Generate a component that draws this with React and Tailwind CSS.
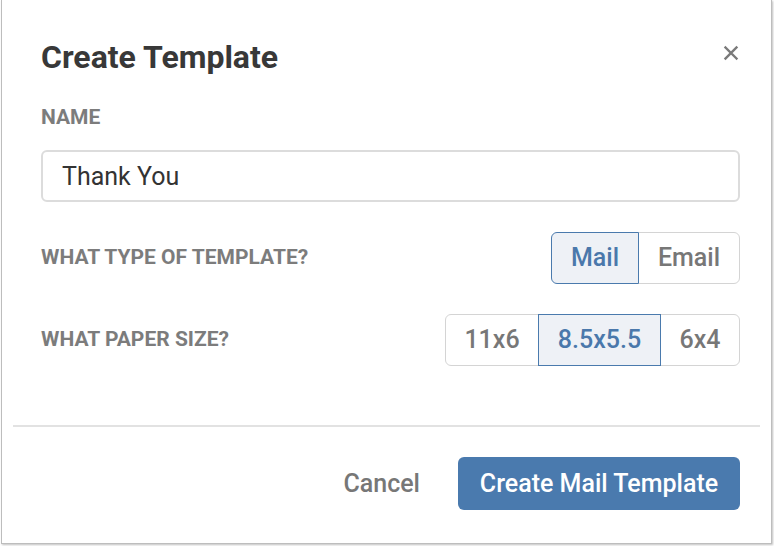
import React, { useState } from 'react';

const font = { fontFamily: 'Roboto, "Liberation Sans", sans-serif' };

function Segmented({ options, value, onChange }) {
  return (
    <div className="flex h-[52px]">
      {options.map((o, i) => {
        const active = o.value === value;
        const first = i === 0;
        const last = i === options.length - 1;
        return (
          <button
            key={o.value}
            onClick={() => onChange(o.value)}
            style={{ width: o.w }}
            className={[
              'h-full text-[25px] font-medium border',
              first ? 'rounded-l-md' : '-ml-px',
              last ? 'rounded-r-md' : '',
              active
                ? 'relative z-10 bg-[#eef1f6] border-[#4a7aad] text-[#4a78ab]'
                : 'bg-white border-[#d4d4d4] text-[#777]',
            ].join(' ')}
          >
            {o.label}
          </button>
        );
      })}
    </div>
  );
}

export default function App() {
  const [name, setName] = useState('Thank You');
  const [type, setType] = useState('mail');
  const [size, setSize] = useState('8.5x5.5');

  return (
    <div style={font} className="w-[774px] h-[546px] bg-white">
      <div className="w-[771px] h-[544px] ml-px border-l border-r border-b border-[#bdbdbd] shadow-[1px_1px_2px_rgba(0,0,0,0.25)] bg-white flex flex-col">
        <div className="pl-[39px] pr-[31px] pt-[37px]">
          <div className="flex items-start justify-between">
            <h1 className="text-[32px] font-bold text-[#383838] leading-[40px]">Create Template</h1>
            <button className="mt-[6px] mr-[-1px] text-[#7a7a7a]" aria-label="close">
              <svg width="20" height="20" viewBox="0 0 20 20">
                <path d="M4.5 4.5 L15.5 15.5 M15.5 4.5 L4.5 15.5" stroke="currentColor" strokeWidth="2.4" strokeLinecap="square" />
              </svg>
            </button>
          </div>

          <div className="mt-[28px] text-[21px] font-bold text-[#7c7c7c] leading-[24px]">NAME</div>
          <input
            value={name}
            onChange={(e) => setName(e.target.value)}
            className="mt-[21px] w-full h-[52px] border-2 border-[#dcdcdc] rounded-md px-[19px] text-[25px] text-[#333] outline-none"
          />

          <div className="mt-[30px] flex items-center justify-between">
            <div className="text-[21px] font-bold text-[#7c7c7c]">WHAT TYPE OF TEMPLATE?</div>
            <Segmented
              value={type}
              onChange={setType}
              options={[
                { value: 'mail', label: 'Mail', w: 88 },
                { value: 'email', label: 'Email', w: 102 },
              ]}
            />
          </div>

          <div className="mt-[30px] flex items-center justify-between">
            <div className="text-[21px] font-bold text-[#7c7c7c]">WHAT PAPER SIZE?</div>
            <Segmented
              value={size}
              onChange={setSize}
              options={[
                { value: '11x6', label: '11x6', w: 94 },
                { value: '8.5x5.5', label: '8.5x5.5', w: 123 },
                { value: '6x4', label: '6x4', w: 80 },
              ]}
            />
          </div>
        </div>

        <div className="mx-[11px] mt-[59px] h-[2px] bg-[#e2e2e2]" />

        <div className="pr-[31px] mt-[30px] flex items-center justify-end gap-[38px]">
          <button className="text-[25px] font-medium text-[#777]">Cancel</button>
          <button className="h-[53px] w-[282px] rounded-md bg-[#4a7aae] text-white text-[25px] font-medium">
            Create Mail Template
          </button>
        </div>
      </div>
    </div>
  );
}
